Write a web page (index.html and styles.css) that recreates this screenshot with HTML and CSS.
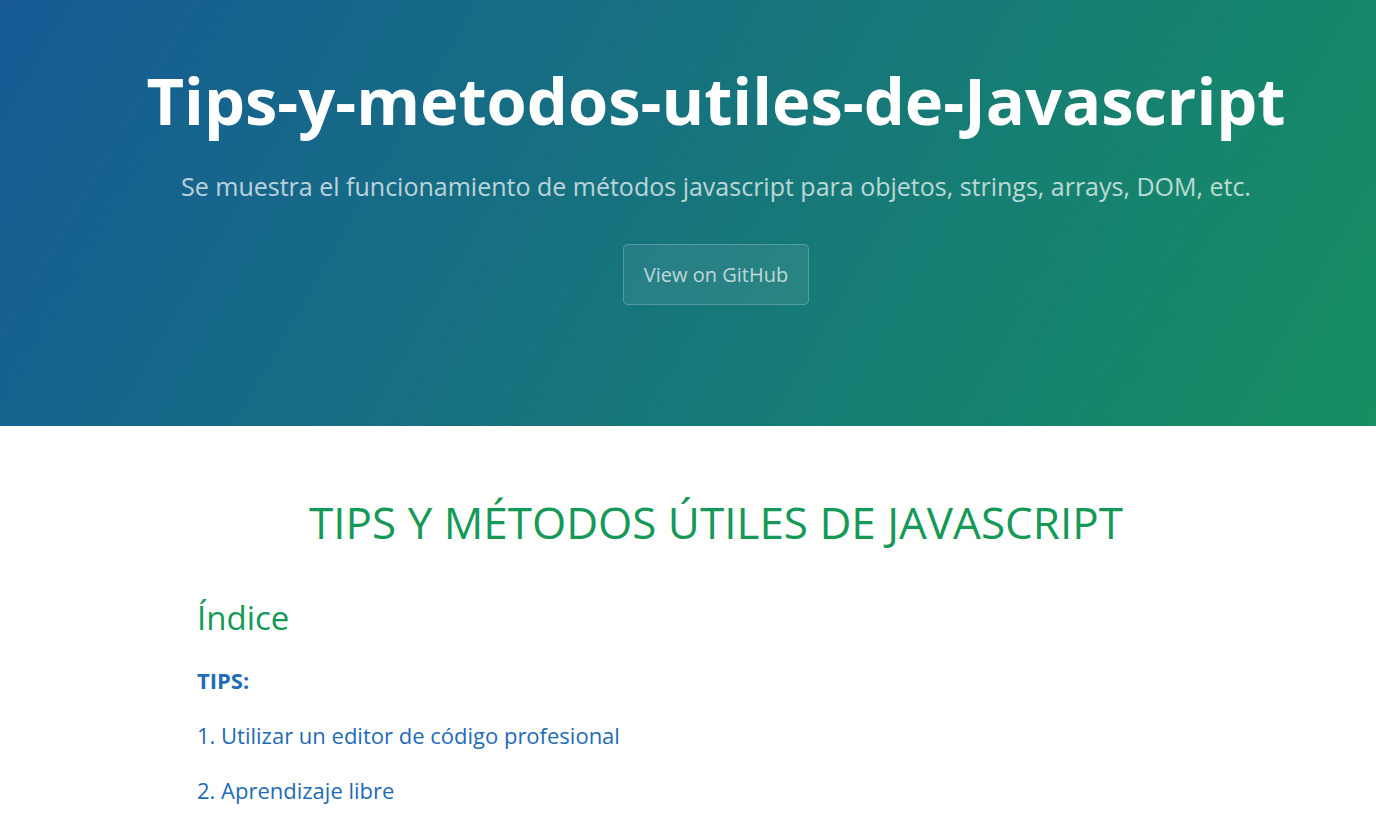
FILE: index.html
```html
<!DOCTYPE html>
<html lang="es">
<head>
<meta charset="utf-8">
<title>Tips-y-metodos-utiles-de-Javascript</title>
<link rel="stylesheet" href="styles.css">
</head>
<body>
<header class="page-header">
  <h1 class="project-name">Tips-y-metodos-utiles-de-Javascript</h1>
  <h2 class="project-tagline">Se muestra el funcionamiento de métodos javascript para objetos, strings, arrays, DOM, etc.</h2>
  <a class="btn" href="#">View on GitHub</a>
</header>
<main class="main-content">
  <h1 class="doc-title">TIPS Y MÉTODOS ÚTILES DE JAVASCRIPT</h1>
  <h2 class="section-title">Índice</h2>
  <p class="toc-item"><a href="#" class="toc-head">TIPS:</a></p>
  <p class="toc-item"><a href="#">1. Utilizar un editor de código profesional</a></p>
  <p class="toc-item"><a href="#">2. Aprendizaje libre</a></p>
</main>
</body>
</html>
```
FILE: styles.css
```css
* { box-sizing: border-box; }
html, body { margin: 0; padding: 0; }
body {
  font-family: "Open Sans", "Helvetica Neue", Helvetica, Arial, sans-serif;
  color: #606c71;
  background: #fff;
  line-height: 1.5;
  overflow: hidden;
}
a { color: #1e6bb8; text-decoration: none; }

.page-header {
  height: 426px;
  padding: 63px 68px 0 124px;
  text-align: center;
  color: #fff;
  background-color: #159957;
  background-image: linear-gradient(120deg, #165b96, #168f62);
}
.project-name {
  margin: 0;
  font-size: 65px;
  font-weight: 700;
  line-height: 74px;
}
.project-tagline {
  margin: 31px 0 0;
  font-size: 25px;
  font-weight: 400;
  line-height: 36px;
  opacity: 0.7;
}
.btn {
  display: inline-block;
  margin-top: 40px;
  padding: 16px 20px;
  font-size: 20px;
  line-height: 27px;
  color: rgba(255, 255, 255, 0.7);
  background-color: rgba(255, 255, 255, 0.08);
  border: 1px solid rgba(255, 255, 255, 0.2);
  border-radius: 5px;
}

.main-content {
  padding: 0 141px 0 197px;
}
.doc-title {
  margin: 68px 0 0;
  text-align: center;
  font-size: 44px;
  font-weight: 400;
  line-height: 56px;
  color: #159957;
}
.section-title {
  margin: 46px 0 0;
  font-size: 33px;
  font-weight: 400;
  line-height: 44px;
  color: #159957;
}
.toc-item {
  margin: 0;
  font-size: 22px;
  line-height: 30px;
}
.toc-item + .toc-item { margin-top: 25px; }
.section-title + .toc-item { margin-top: 25px; }
.toc-head { font-weight: 700; }
```
